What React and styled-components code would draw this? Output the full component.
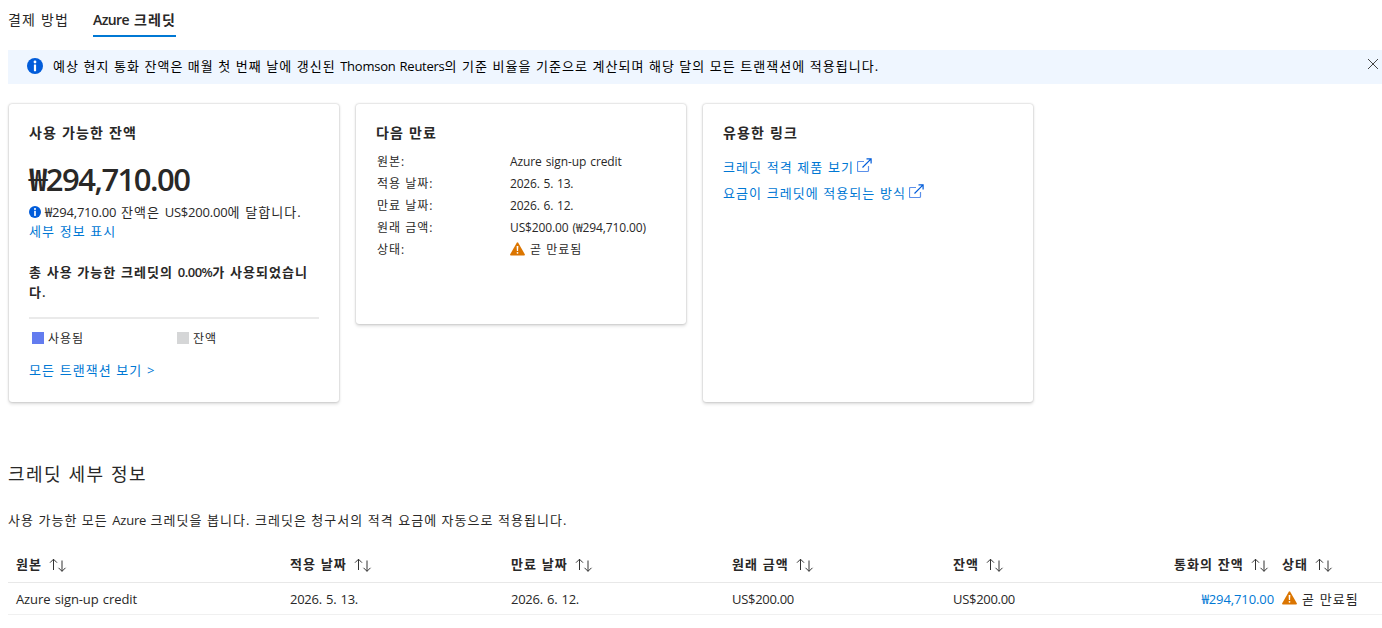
import React from "react";
import styled, { createGlobalStyle } from "styled-components";

const columns = ["원본", "적용 날짜", "만료 날짜", "원래 금액", "잔액", "통화의 잔액", "상태"];

export default function App() {
  return (
    <Page>
      <GlobalStyle />
      <Tabs>
        <Tab>결제 방법</Tab>
        <Tab $active>
          <En $ls="-0.6px">Azure</En> 크레딧
        </Tab>
      </Tabs>
      <Banner>
        <InfoIcon size={16} />
        <BannerText>
          예상 현지 통화 잔액은 매월 첫 번째 날에 갱신된 <En $ls="-0.25px">Thomson Reuters</En>의 기준 비율을 기준으로
          계산되며 해당 달의 모든 트랜잭션에 적용됩니다.
        </BannerText>
        <CloseButton>
          <CloseIcon />
        </CloseButton>
      </Banner>

      <Cards>
        <Card $height={298}>
          <CardTitle>사용 가능한 잔액</CardTitle>
          <Amount>₩294,710.00</Amount>
          <Note>
            <InfoIcon size={12} />
            <span>
              <En>₩294,710.00</En> 잔액은 <En>US$200.00</En>에 달합니다.
            </span>
          </Note>
          <DetailLink>세부 정보 표시</DetailLink>
          <Usage>
            총 사용 가능한 크레딧의 <En $ls="-0.5px">0.00%</En>가 사용되었습니
            <br />
            다.
          </Usage>
          <UsageBar />
          <Legend>
            <LegendItem>
              <Swatch $color="#637cef" />
              사용됨
            </LegendItem>
            <LegendItem>
              <Swatch $color="#d5d6d7" />
              잔액
            </LegendItem>
          </Legend>
          <AllLink>모든 트랜잭션 보기 &gt;</AllLink>
        </Card>

        <Card $height={220}>
          <CardTitle>다음 만료</CardTitle>
          <Facts>
            <Label>원본:</Label>
            <Value>
              <En $ls="-0.1px">Azure sign-up credit</En>
            </Value>
            <Label>적용 날짜:</Label>
            <Value>
              <En>2026. 5. 13.</En>
            </Value>
            <Label>만료 날짜:</Label>
            <Value>
              <En>2026. 6. 12.</En>
            </Value>
            <Label>원래 금액:</Label>
            <Value>
              <En $ls="-0.12px">US$200.00 (₩294,710.00)</En>
            </Value>
            <Label>상태:</Label>
            <Value>
              <WarningIcon />곧 만료됨
            </Value>
          </Facts>
        </Card>

        <Card $height={298}>
          <CardTitle>유용한 링크</CardTitle>
          <Links>
            <ExternalLink>
              크레딧 적격 제품 보기
              <ExternalIcon />
            </ExternalLink>
            <ExternalLink>
              요금이 크레딧에 적용되는 방식
              <ExternalIcon />
            </ExternalLink>
          </Links>
        </Card>
      </Cards>

      <SectionTitle>크레딧 세부 정보</SectionTitle>
      <Description>
        사용 가능한 모든 <En>Azure</En> 크레딧을 봅니다. 크레딧은 청구서의 적격 요금에 자동으로 적용됩니다.
      </Description>

      <HeaderRow>
        {columns.map((name) => (
          <HeaderCell key={name}>
            {name}
            <SortIcon />
          </HeaderCell>
        ))}
      </HeaderRow>
      <Row>
        <Cell>
          <En $ls="-0.1px">Azure sign-up credit</En>
        </Cell>
        <Cell>
          <En $ls="-0.25px">2026. 5. 13.</En>
        </Cell>
        <Cell>
          <En $ls="-0.25px">2026. 6. 12.</En>
        </Cell>
        <Cell>
          <En $ls="-0.3px">US$200.00</En>
        </Cell>
        <Cell>
          <En $ls="-0.3px">US$200.00</En>
        </Cell>
        <LinkCell>
          <En $ls="-0.1px">₩294,710.00</En>
        </LinkCell>
        <Cell>
          <WarningIcon />곧 만료됨
        </Cell>
      </Row>
    </Page>
  );
}

function InfoIcon({ size }) {
  return (
    <Icon width={size} height={size} viewBox="0 0 16 16">
      <circle cx="8" cy="8" r="8" fill="#015cda" />
      <circle cx="8" cy="4" r="1.4" fill="#fff" />
      <rect x="6.9" y="6.4" width="2.2" height="6.8" rx="0.4" fill="#fff" />
    </Icon>
  );
}

function CloseIcon() {
  return (
    <Icon width="12" height="12" viewBox="0 0 12 12">
      <path d="M1 1L11 11M11 1L1 11" stroke="#444" strokeWidth="1" />
    </Icon>
  );
}

function WarningIcon() {
  return (
    <Icon width="15" height="14" viewBox="0 0 15 14">
      <path
        d="M6.8 0.7Q7.5 -0.3 8.2 0.7L14.8 12.3Q15.2 13.5 14.1 13.5H0.9Q-0.2 13.5 0.2 12.3Z"
        fill="#db7500"
      />
      <path d="M6.6 4h1.8l-.3 5H6.9z" fill="#fff" />
      <circle cx="7.5" cy="10.8" r="0.9" fill="#fff" />
    </Icon>
  );
}

function ExternalIcon() {
  return (
    <Icon width="15" height="15" viewBox="0 0 15 15" fill="none">
      <path
        d="M7 3.5H1.5Q0.5 3.5 0.5 4.5V12.5Q0.5 13.5 1.5 13.5H10.5Q11.5 13.5 11.5 12.5V8"
        stroke="#5b90ea"
        strokeWidth="1.2"
      />
      <path d="M5.5 9.5L13.8 1.2M9.5 0.9H14.1V5.5" stroke="#015cda" strokeWidth="1.2" />
    </Icon>
  );
}

function SortIcon() {
  return (
    <Icon width="18" height="14" viewBox="0 0 18 14" fill="none" stroke="#333" strokeWidth="1">
      <path d="M4.5 12V1.2M1 4.7L4.5 1.2L8 4.7" />
      <path d="M13 2.5V13.3M9.5 9.8L13 13.3L16.5 9.8" />
    </Icon>
  );
}

const GlobalStyle = createGlobalStyle`
  * {
    box-sizing: border-box;
    letter-spacing: 0.08em;
    word-spacing: 0.02em;
  }
  body {
    margin: 0;
    background: #fff;
    color: #292827;
    font-family: "Open Sans", "Noto Sans CJK KR", sans-serif;
    font-size: 13px;
  }
`;

const Page = styled.div`
  height: 628px;
  padding-left: 8px;
  overflow: hidden;
  white-space: nowrap;
`;

// Latin runs and figures keep a tighter tracking than the Hangul around them
const En = styled.span`
  letter-spacing: ${({ $ls }) => $ls || "-0.2px"};
  word-spacing: 1px;
`;

const Icon = styled.svg`
  display: block;
  flex: none;
`;

const Tabs = styled.div`
  display: flex;
  gap: 24px;
  height: 50px;
`;

const Tab = styled.div`
  height: 37px;
  line-height: 39px;
  font-size: 14px;
  font-weight: ${({ $active }) => ($active ? 600 : 400)};
  border-bottom: 2px solid ${({ $active }) => ($active ? "#0078d4" : "transparent")};
`;

const Banner = styled.div`
  display: flex;
  align-items: center;
  height: 34px;
  padding: 0 3px 2px 19px;
  background: #eff6ff;
  color: #000;
`;

const BannerText = styled.div`
  flex: 1;
  margin-left: 10px;
  line-height: 20px;
  word-spacing: 0.05px;
`;

const CloseButton = styled.div`
  padding-bottom: 4px;
`;

const Cards = styled.div`
  display: flex;
  align-items: flex-start;
  gap: 17px;
  height: 299px;
  margin-top: 20px;
  padding-left: 1px;
`;

const Card = styled.div`
  width: 330px;
  height: ${({ $height }) => $height}px;
  padding: 19px 20px 0;
  border-radius: 3px;
  background: #fff;
  box-shadow: 0 1.6px 3.6px rgba(0, 0, 0, 0.14), 0 0 2px rgba(0, 0, 0, 0.25);
`;

const CardTitle = styled.div`
  line-height: 20px;
  font-size: 14px;
  font-weight: 600;
`;

const Amount = styled.div`
  height: 40px;
  margin-top: 16px;
  line-height: 40px;
  font-size: 31px;
  font-weight: 600;
  letter-spacing: -1.5px;
`;

const Note = styled.div`
  display: flex;
  align-items: center;
  gap: 4px;
  height: 20px;
  margin-top: 2px;

  svg {
    margin-top: 2px;
  }
`;

const Anchor = styled.a`
  color: #0078d4;
  cursor: pointer;
`;

const DetailLink = styled(Anchor)`
  display: block;
  line-height: 20px;
`;

const Usage = styled.div`
  margin-top: 21px;
  line-height: 20px;
  font-weight: 600;
`;

const UsageBar = styled.div`
  height: 2px;
  margin-top: 15px;
  background: #eaeaea;
`;

const Legend = styled.div`
  display: grid;
  grid-template-columns: 145px 1fr;
  margin-top: 9px;
  padding-left: 3px;
  font-size: 12px;
`;

const LegendItem = styled.div`
  display: flex;
  align-items: center;
  gap: 4px;
  height: 20px;
`;

const Swatch = styled.div`
  width: 12px;
  height: 12px;
  background: ${({ $color }) => $color};
`;

const AllLink = styled(Anchor)`
  display: block;
  margin-top: 12px;
  line-height: 20px;
`;

const Facts = styled.div`
  display: grid;
  grid-template-columns: 133px 1fr;
  grid-auto-rows: 22px;
  margin-top: 8px;
  padding-left: 1px;
  font-size: 12px;
  line-height: 22px;
`;

const Label = styled.div``;

const Value = styled.div`
  display: flex;
  align-items: center;
  gap: 5px;

  svg {
    margin-bottom: 2px;
  }
`;

const Links = styled.div`
  display: flex;
  flex-direction: column;
  margin-top: 10px;
`;

const ExternalLink = styled(Anchor)`
  display: flex;
  align-items: center;
  gap: 3px;
  height: 26px;

  svg {
    margin-bottom: 2px;
  }
`;

const SectionTitle = styled.div`
  margin-top: 59px;
  line-height: 24px;
  font-size: 18px;
`;

const Description = styled.div`
  margin-top: 24px;
  line-height: 20px;
  word-spacing: 0;
`;

const HeaderRow = styled.div`
  display: grid;
  grid-template-columns: 274px 221px 221px 221px 221px 116px 1fr;
  height: 36px;
  margin-top: 17px;
  border-bottom: 1px solid #e8e8e8;
`;

const Row = styled(HeaderRow)`
  height: 32px;
  margin-top: 0;
  border-bottom-color: #f0f0f0;
`;

const Cell = styled.div`
  display: flex;
  align-items: center;
  gap: 5px;
  padding: 0 8px;

  &:last-child {
    padding-left: 0;
  }

  svg {
    margin-bottom: 2px;
  }
`;

const HeaderCell = styled(Cell)`
  gap: 7px;
  padding-bottom: 2px;
  font-weight: 600;

  svg {
    margin: 2px 0 0;
  }
`;

const LinkCell = styled(Cell)`
  justify-content: flex-end;
  color: #0078d4;
`;
